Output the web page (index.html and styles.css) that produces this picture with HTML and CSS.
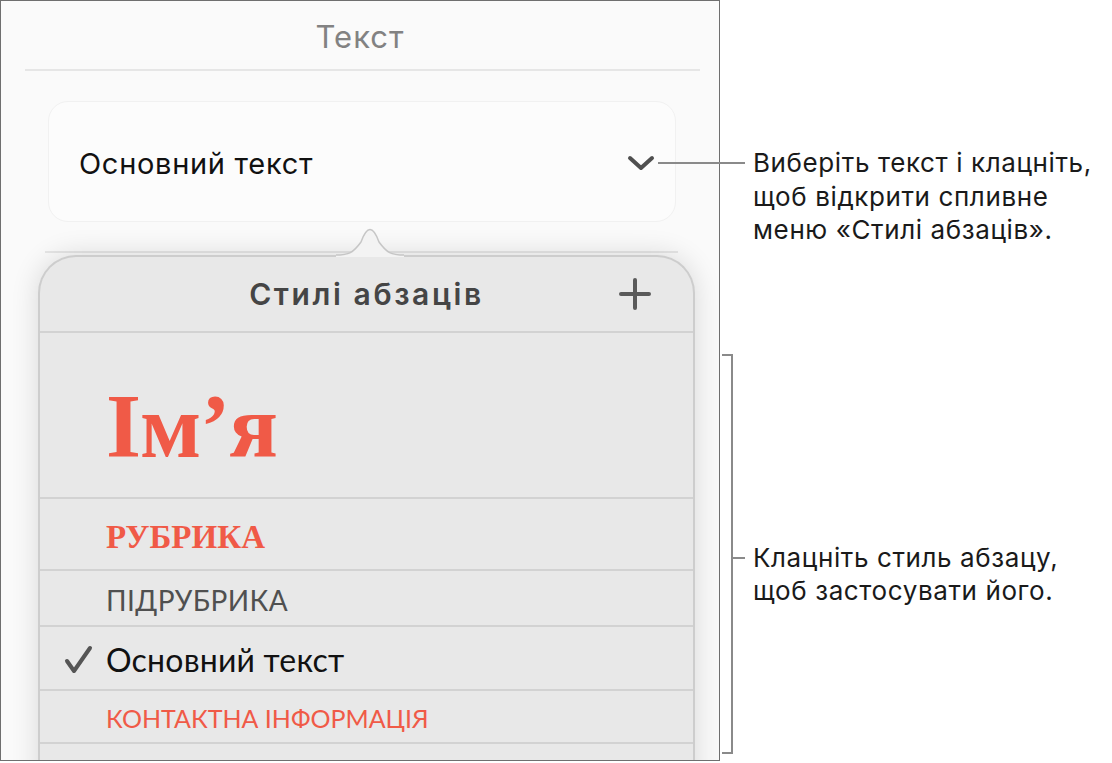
FILE: index.html
```html
<!DOCTYPE html>
<html lang="uk">
<head>
  <meta charset="UTF-8">
  <title>Стилі абзаців</title>
  <meta name="viewport" content="width=device-width, initial-scale=1.0">
  <link rel="stylesheet" href="styles.css">
</head>
<body>

  <div class="page">

    <div class="panel">
      <h1 class="panel-title">Текст</h1>
      <div class="rule rule-top"></div>

      <div class="picker">
        <span>Основний текст</span>
        <svg class="chevron" width="28" height="17" viewBox="0 0 28 17">
          <path d="M3 3 L14 13 L25 3" />
        </svg>
      </div>

      <div class="rule rule-bottom"></div>

      <div class="popover">
        <svg class="arrow" width="68" height="32" viewBox="0 0 68 32">
          <path class="arrow-fill" d="M0 32 L0 30 C13 30 17 28 25 17 Q34 -8 43 17 C51 28 55 30 68 30 L68 32 Z" />
          <path class="arrow-line" d="M0 30 C13 30 17 28 25 17 Q34 -8 43 17 C51 28 55 30 68 30" />
        </svg>

        <div class="popover-head">
          <h2>Стилі абзаців</h2>
          <svg class="plus" width="32" height="32" viewBox="0 0 32 32">
            <path d="M16 2 V30 M2 16 H30" />
          </svg>
        </div>

        <ul class="styles">
          <li class="style style-name">Ім’я</li>
          <li class="style style-heading">РУБРИКА</li>
          <li class="style style-sub">ПІДРУБРИКА</li>
          <li class="style style-body">
            <svg class="check" width="30" height="30" viewBox="0 0 30 30">
              <path d="M3 16 L10 26 L26 3" />
            </svg>
            Основний текст
          </li>
          <li class="style style-contact">КОНТАКТНА ІНФОРМАЦІЯ</li>
          <li class="style style-empty"></li>
        </ul>
      </div>
    </div>

    <div class="notes">
      <p class="note note-top">Виберіть текст і клацніть,<br>щоб відкрити спливне<br>меню «Стилі абзаців».</p>
      <p class="note note-bottom">Клацніть стиль абзацу,<br>щоб застосувати його.</p>
    </div>

    <span class="leader"></span>
    <span class="bracket"></span>
    <span class="bracket-tick"></span>

  </div>

</body>
</html>
```

FILE: styles.css
```css
body {
  margin: 0;
  background: #fff;
  font-family: 'Inter', 'Roboto', sans-serif;
  color: #1a1a1a;
}

.page {
  position: relative;
  display: flex;
  width: 1112px;
  height: 763px;
}

.panel {
  width: 718px;
  height: 759px;
  border: 1px solid #6f6f6f;
  background: #fafafa;
  overflow: hidden;
  flex: none;
}

.panel-title {
  margin: 0;
  padding-top: 18px;
  line-height: 36px;
  font-size: 31px;
  font-weight: 400;
  letter-spacing: 1px;
  text-align: center;
  color: #828282;
}

.rule {
  height: 2px;
  background: #e6e6e6;
}

.rule-top {
  margin: 14px 19px 0 24px;
}

.rule-bottom {
  margin: 29px 41px 0 44px;
}

.picker {
  display: flex;
  align-items: center;
  justify-content: space-between;
  margin: 30px 43px 0 47px;
  padding: 3px 20px 0 30px;
  box-sizing: border-box;
  height: 121px;
  background: #fcfcfc;
  border: 1px solid #f1f1f1;
  border-radius: 20px;
  font-size: 29px;
  letter-spacing: 0.7px;
  color: #111;
}

.chevron path {
  fill: none;
  stroke: #4f4f4f;
  stroke-width: 4;
  stroke-linecap: round;
  stroke-linejoin: round;
}

.popover {
  position: relative;
  width: 653px;
  height: 600px;
  margin: 2px 0 0 37px;
  background: #e8e8e8;
  border: 2px solid #cdcdcd;
  border-bottom: none;
  border-radius: 38px 38px 0 0;
  box-shadow: 0 0 28px rgba(0, 0, 0, 0.14);
}

.arrow {
  position: absolute;
  top: -32px;
  left: 296px;
}

.arrow-fill {
  fill: #f3f3f3;
}

.arrow-line {
  fill: none;
  stroke: #c6c6c6;
  stroke-width: 1.5;
}

.popover-head {
  display: grid;
  grid-template-columns: 1fr auto 1fr;
  align-items: center;
  height: 74px;
  border-bottom: 2px solid #d2d2d2;
}

.popover-head h2 {
  grid-column: 2;
  margin: 0;
  font-size: 30px;
  font-weight: 600;
  letter-spacing: 2.6px;
  color: #454545;
}

.plus {
  justify-self: end;
  margin-right: 42px;
}

.plus path {
  fill: none;
  stroke: #5a5a5a;
  stroke-width: 4;
  stroke-linecap: round;
}

.styles {
  list-style: none;
  margin: 0;
  padding: 0;
}

.style {
  display: flex;
  align-items: center;
  box-sizing: border-box;
  padding-left: 66px;
  border-bottom: 2px solid #d2d2d2;
}

.style-name {
  height: 166px;
  padding-top: 22px;
  font-family: 'Liberation Serif', serif;
  font-weight: 700;
  font-size: 90px;
  letter-spacing: -1px;
  color: #f05a47;
}

.style-heading {
  height: 72px;
  padding-top: 6px;
  font-family: 'Liberation Serif', serif;
  font-weight: 700;
  font-size: 33px;
  color: #f05a47;
}

.style-sub {
  height: 56px;
  padding-top: 3px;
  font-family: 'Lato', sans-serif;
  font-size: 28px;
  letter-spacing: 0.4px;
  color: #505050;
}

.style-body {
  height: 64px;
  padding-left: 24px;
  padding-top: 3px;
  font-family: 'Lato', sans-serif;
  font-size: 32px;
  letter-spacing: 0.2px;
  color: #111;
}

.check {
  margin-right: 12px;
}

.check path {
  fill: none;
  stroke: #555;
  stroke-width: 4;
  stroke-linecap: round;
  stroke-linejoin: round;
}

.style-contact {
  height: 53px;
  padding-top: 3px;
  font-family: 'Lato', sans-serif;
  font-size: 25px;
  color: #f05a47;
}

.style-empty {
  height: 60px;
}

.notes {
  padding-left: 33px;
}

.note {
  margin: 0;
  white-space: nowrap;
  font-size: 26px;
  line-height: 33.5px;
  letter-spacing: 0.6px;
}

.note-top {
  margin-top: 146px;
}

.note-bottom {
  margin-top: 294px;
}

.leader {
  position: absolute;
  left: 658px;
  top: 162px;
  width: 87px;
  height: 2px;
  background: #8a8a8a;
}

.bracket {
  position: absolute;
  left: 722px;
  top: 354px;
  width: 9px;
  height: 396px;
  border: 2px solid #8a8a8a;
  border-left: none;
}

.bracket-tick {
  position: absolute;
  left: 733px;
  top: 557px;
  width: 12px;
  height: 2px;
  background: #8a8a8a;
}
```
